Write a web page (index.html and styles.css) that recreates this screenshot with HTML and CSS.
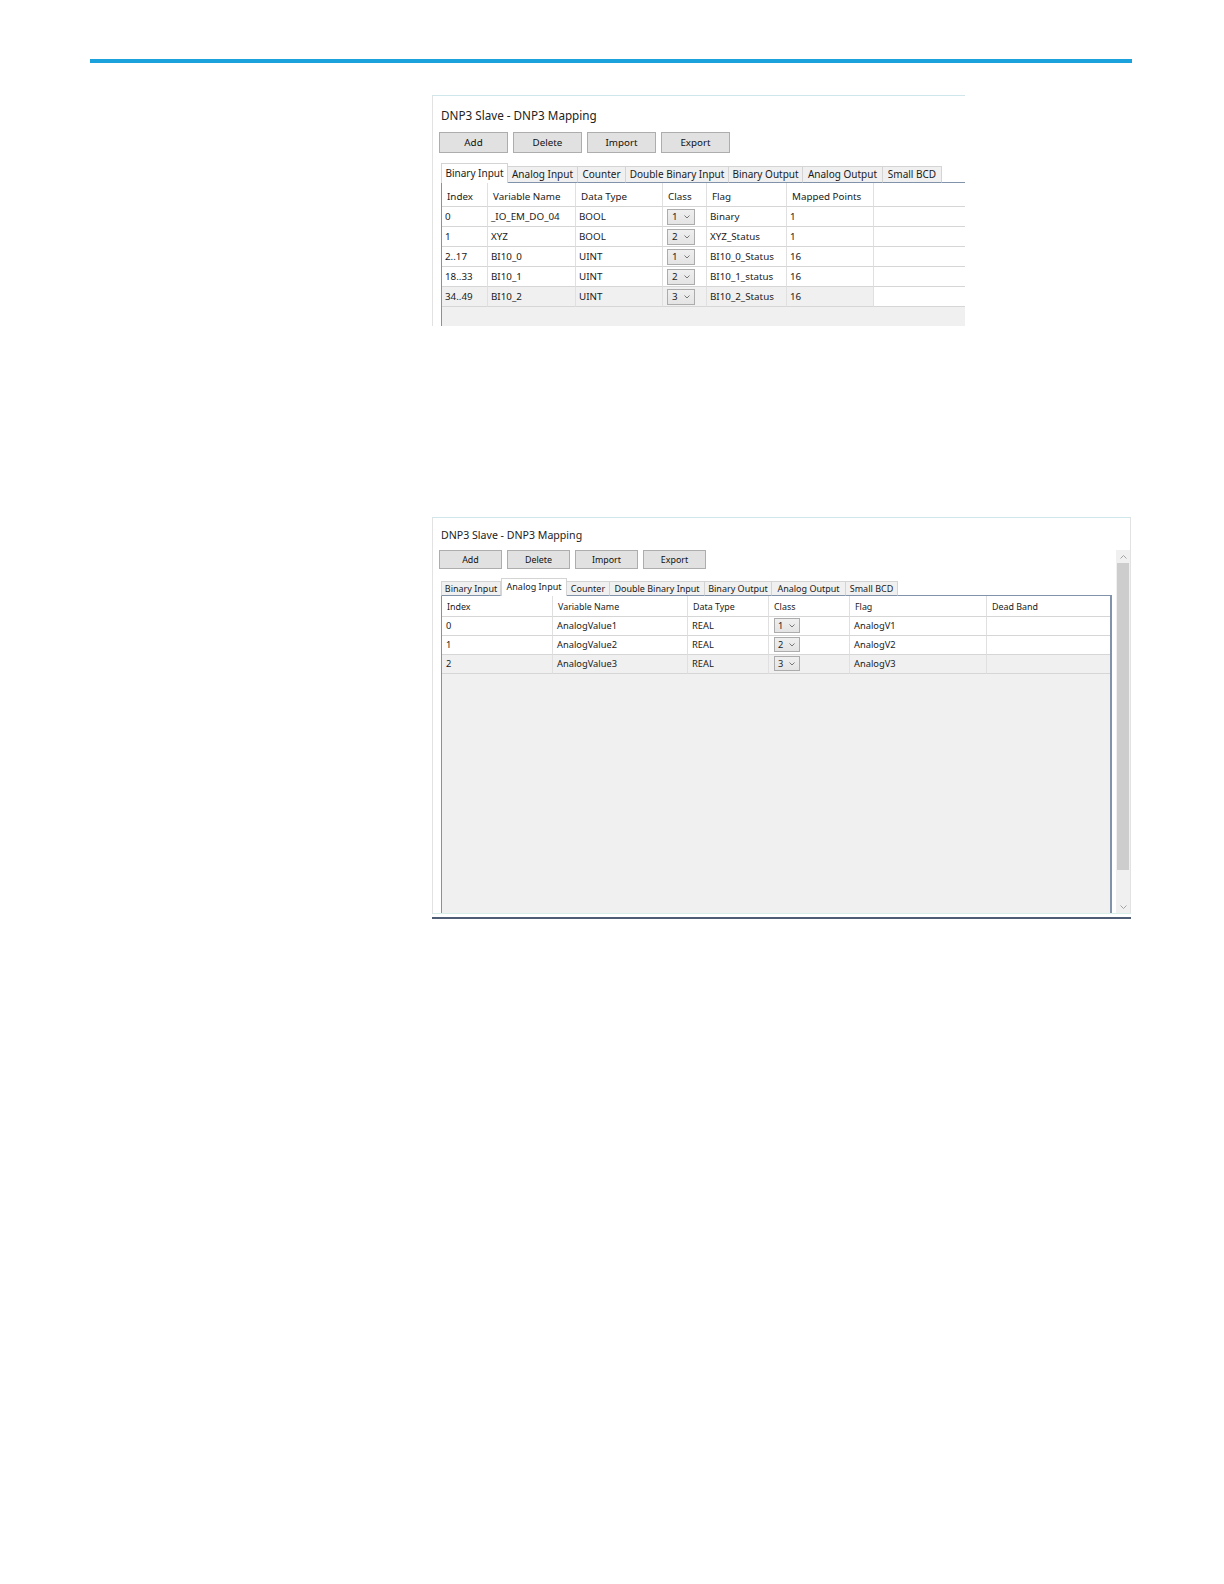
FILE: index.html
```html
<!DOCTYPE html>
<html>
<head>
<meta charset="utf-8">
<title>DNP3 Mapping</title>
<link rel="stylesheet" href="styles.css">
</head>
<body>
<div class="page">
  <div class="rule"></div>

  <section class="panel panel-a">
    <div class="title">DNP3 Slave - DNP3 Mapping</div>
    <div class="toolbar">
      <button class="btn">Add</button>
      <button class="btn">Delete</button>
      <button class="btn">Import</button>
      <button class="btn">Export</button>
    </div>
    <div class="tabs">
      <div class="tab active w-bi">Binary Input</div>
      <div class="tab w-ai">Analog Input</div>
      <div class="tab w-ct">Counter</div>
      <div class="tab w-dbi">Double Binary Input</div>
      <div class="tab w-bo">Binary Output</div>
      <div class="tab w-ao">Analog Output</div>
      <div class="tab w-sb">Small BCD</div>
      <div class="tab-fill"></div>
    </div>
    <div class="grid">
      <div class="row head">
        <div class="cell">Index</div><div class="cell">Variable Name</div><div class="cell">Data Type</div><div class="cell">Class</div><div class="cell">Flag</div><div class="cell">Mapped Points</div><div class="cell fill"></div>
      </div>
      <div class="row">
        <div class="cell">0</div><div class="cell">_IO_EM_DO_04</div><div class="cell">BOOL</div>
        <div class="cell"><div class="combo"><span>1</span><svg class="chev" width="6" height="4" viewBox="0 0 6 4"><path d="M0.5 0.5 L3 3 L5.5 0.5" fill="none" stroke="#777" stroke-width="1"/></svg></div></div>
        <div class="cell">Binary</div><div class="cell">1</div><div class="cell fill"></div>
      </div>
      <div class="row">
        <div class="cell">1</div><div class="cell">XYZ</div><div class="cell">BOOL</div>
        <div class="cell"><div class="combo"><span>2</span><svg class="chev" width="6" height="4" viewBox="0 0 6 4"><path d="M0.5 0.5 L3 3 L5.5 0.5" fill="none" stroke="#777" stroke-width="1"/></svg></div></div>
        <div class="cell">XYZ_Status</div><div class="cell">1</div><div class="cell fill"></div>
      </div>
      <div class="row">
        <div class="cell">2..17</div><div class="cell">BI10_0</div><div class="cell">UINT</div>
        <div class="cell"><div class="combo"><span>1</span><svg class="chev" width="6" height="4" viewBox="0 0 6 4"><path d="M0.5 0.5 L3 3 L5.5 0.5" fill="none" stroke="#777" stroke-width="1"/></svg></div></div>
        <div class="cell">BI10_0_Status</div><div class="cell">16</div><div class="cell fill"></div>
      </div>
      <div class="row">
        <div class="cell">18..33</div><div class="cell">BI10_1</div><div class="cell">UINT</div>
        <div class="cell"><div class="combo"><span>2</span><svg class="chev" width="6" height="4" viewBox="0 0 6 4"><path d="M0.5 0.5 L3 3 L5.5 0.5" fill="none" stroke="#777" stroke-width="1"/></svg></div></div>
        <div class="cell">BI10_1_status</div><div class="cell">16</div><div class="cell fill"></div>
      </div>
      <div class="row alt">
        <div class="cell">34..49</div><div class="cell">BI10_2</div><div class="cell">UINT</div>
        <div class="cell"><div class="combo"><span>3</span><svg class="chev" width="6" height="4" viewBox="0 0 6 4"><path d="M0.5 0.5 L3 3 L5.5 0.5" fill="none" stroke="#777" stroke-width="1"/></svg></div></div>
        <div class="cell">BI10_2_Status</div><div class="cell">16</div><div class="cell fill"></div>
      </div>
      <div class="grid-empty"></div>
    </div>
  </section>

  <section class="panel panel-b">
    <div class="title">DNP3 Slave - DNP3 Mapping</div>
    <div class="body">
      <div class="main">
        <div class="toolbar">
          <button class="btn">Add</button>
          <button class="btn">Delete</button>
          <button class="btn">Import</button>
          <button class="btn">Export</button>
        </div>
        <div class="tabs">
          <div class="tab w-bi">Binary Input</div>
          <div class="tab active w-ai">Analog Input</div>
          <div class="tab w-ct">Counter</div>
          <div class="tab w-dbi">Double Binary Input</div>
          <div class="tab w-bo">Binary Output</div>
          <div class="tab w-ao">Analog Output</div>
          <div class="tab w-sb">Small BCD</div>
          <div class="tab-fill"></div>
        </div>
        <div class="grid">
          <div class="row head">
            <div class="cell">Index</div><div class="cell">Variable Name</div><div class="cell">Data Type</div><div class="cell">Class</div><div class="cell">Flag</div><div class="cell">Dead Band</div>
          </div>
          <div class="row">
            <div class="cell">0</div><div class="cell">AnalogValue1</div><div class="cell">REAL</div>
            <div class="cell"><div class="combo"><span>1</span><svg class="chev" width="6" height="4" viewBox="0 0 6 4"><path d="M0.5 0.5 L3 3 L5.5 0.5" fill="none" stroke="#777" stroke-width="1"/></svg></div></div>
            <div class="cell">AnalogV1</div><div class="cell"></div>
          </div>
          <div class="row">
            <div class="cell">1</div><div class="cell">AnalogValue2</div><div class="cell">REAL</div>
            <div class="cell"><div class="combo"><span>2</span><svg class="chev" width="6" height="4" viewBox="0 0 6 4"><path d="M0.5 0.5 L3 3 L5.5 0.5" fill="none" stroke="#777" stroke-width="1"/></svg></div></div>
            <div class="cell">AnalogV2</div><div class="cell"></div>
          </div>
          <div class="row alt">
            <div class="cell">2</div><div class="cell">AnalogValue3</div><div class="cell">REAL</div>
            <div class="cell"><div class="combo"><span>3</span><svg class="chev" width="6" height="4" viewBox="0 0 6 4"><path d="M0.5 0.5 L3 3 L5.5 0.5" fill="none" stroke="#777" stroke-width="1"/></svg></div></div>
            <div class="cell">AnalogV3</div><div class="cell"></div>
          </div>
          <div class="grid-empty"></div>
        </div>
      </div>
      <div class="scrollbar">
        <div class="sb-btn"><svg width="7" height="4" viewBox="0 0 7 4"><path d="M0.5 3.5 L3.5 0.5 L6.5 3.5" fill="none" stroke="#a3a3a3" stroke-width="1"/></svg></div>
        <div class="sb-thumb"></div>
        <div class="sb-track"></div>
        <div class="sb-btn"><svg width="7" height="4" viewBox="0 0 7 4"><path d="M0.5 0.5 L3.5 3.5 L6.5 0.5" fill="none" stroke="#a3a3a3" stroke-width="1"/></svg></div>
      </div>
    </div>
  </section>
  <div class="panel-foot"></div>
</div>
</body>
</html>
```

FILE: styles.css
```css
* { box-sizing: border-box; }
html, body { margin: 0; padding: 0; background: #fff; }
body {
  width: 1224px;
  height: 1584px;
  font-family: "Noto Sans", "Open Sans", sans-serif;
  color: #1a1a1a;
  overflow: hidden;
}
.page { padding-top: 59px; }
.rule { margin-left: 90px; width: 1042px; height: 4px; background: #1ba1dc; }

.panel { margin-left: 432px; background: #fff; display: flex; flex-direction: column; }
.title { padding-left: 8px; color: #222; white-space: nowrap; }
.toolbar { display: flex; gap: 5px; }
.btn {
  margin: 0; padding: 0;
  background: #e1e1e1;
  border: 1px solid #adadad;
  font-family: inherit;
  color: #111;
  text-align: center;
}
.tabs { display: flex; align-items: flex-end; }
.tab {
  flex: none;
  background: #f0f0f0;
  border-top: 1px solid #d4d4d4;
  border-right: 1px solid #d4d4d4;
  border-bottom: 1px solid #8193aa;
  text-align: center;
  white-space: nowrap;
  color: #1a1a1a;
}
.tab:first-child { border-left: 1px solid #d4d4d4; }
.tab.active { background: #fff; border-bottom: none; border-left: 1px solid #d4d4d4; }
.tab-fill { flex: 1; border-bottom: 1px solid #8193aa; align-self: stretch; }

.grid { display: flex; flex-direction: column; border-left: 1px solid #8193aa; overflow: hidden; }
.row { display: grid; }
.cell {
  border-right: 1px solid #e0e0e0;
  border-bottom: 1px solid #d6d6d6;
  white-space: nowrap;
  overflow: hidden;
  background: #fff;
}
.row.alt .cell { background: #f0f0f0; }
.row.alt .cell.fill { background: #fff; }
.cell.fill { border-right: none; }
.grid-empty { flex: 1; background: #f0f0f0; }

.combo {
  display: flex;
  align-items: center;
  justify-content: space-between;
  background: linear-gradient(#efefef, #e4e4e4);
  border: 1px solid #acacac;
  color: #222;
}

/* ---------- panel A (top) ---------- */
.panel-a {
  margin-top: 32px;
  width: 533px;
  height: 231px;
  border-top: 1px solid #cfe6ea;
  border-left: 1px solid #e2e2e2;
}
.panel-a .title { margin-top: 11px; font-size: 11.7px; line-height: 16px; }
.panel-a .toolbar { margin-top: 9px; padding-left: 6px; }
.panel-a .btn { width: 69px; height: 21px; font-size: 9.8px; line-height: 19px; }
.panel-a .tabs { margin-top: 10px; margin-left: 8px; height: 20px; }
.panel-a .tab { height: 17px; font-size: 10px; line-height: 15px; }
.panel-a .tab.active { height: 20px; line-height: 18px; }
.panel-a .w-bi { width: 67px; }
.panel-a .w-ai { width: 70px; }
.panel-a .w-ct { width: 48px; }
.panel-a .w-dbi { width: 103px; }
.panel-a .w-bo { width: 74px; }
.panel-a .w-ao { width: 80px; }
.panel-a .w-sb { width: 59px; }
.panel-a .grid { flex: 1; margin-left: 8px; }
.panel-a .row { grid-template-columns: 46px 88px 87px 44px 80px 87px 1fr; height: 20px; font-size: 9.8px; }
.panel-a .cell { line-height: 18px; padding-top: 1px; padding-left: 3px; }
.panel-a .row.head { height: 24px; }
.panel-a .row.head .cell { line-height: 15px; padding-top: 6px; padding-left: 5px; }
.panel-a .combo { margin: 1px 0 0 1px; width: 28px; height: 16px; line-height: 14px; padding: 0 4px 0 4px; font-size: 9.8px; }

/* ---------- panel B (bottom) ---------- */
.panel-b {
  margin-top: 191px;
  width: 699px;
  height: 397px;
  border-top: 1px solid #cfe6ea;
  border-left: 1px solid #e2e2e2;
  border-right: 1px solid #e2e2e2;
  border-bottom: 1px solid #d6efe9;
}
.panel-b .title { margin-top: 10px; font-size: 10.6px; line-height: 14px; }
.panel-b .body { flex: 1; display: flex; padding-top: 8px; min-height: 0; }
.panel-b .main { flex: 1; display: flex; flex-direction: column; min-width: 0; }
.panel-b .toolbar { padding-left: 6px; }
.panel-b .btn { width: 63px; height: 19px; font-size: 8.9px; line-height: 17px; }
.panel-b .tabs { margin-top: 9px; margin-left: 8px; width: 671px; height: 18px; }
.panel-b .tab { height: 15px; font-size: 9px; line-height: 13px; }
.panel-b .tab.active { height: 18px; line-height: 16px; }
.panel-b .w-bi { width: 60px; }
.panel-b .w-ai { width: 66px; }
.panel-b .w-ct { width: 43px; }
.panel-b .w-dbi { width: 95px; }
.panel-b .w-bo { width: 67px; }
.panel-b .w-ao { width: 74px; }
.panel-b .w-sb { width: 52px; }
.panel-b .grid { flex: 1; margin-left: 8px; width: 671px; border-right: 2px solid #8193aa; }
.panel-b .row { grid-template-columns: 111px 135px 81px 81px 137px 123px; height: 19px; font-size: 9.3px; }
.panel-b .cell { line-height: 18px; padding-left: 4px; }
.panel-b .row .cell:last-child { border-right: none; }
.panel-b .row.head { height: 21px; font-size: 8.9px; }
.panel-b .row.head .cell { line-height: 14px; padding-top: 4px; padding-left: 5px; }
.panel-b .combo { margin: 1px 0 0 1px; width: 26px; height: 15px; line-height: 13px; padding: 0 4px 0 3px; font-size: 9.3px; }

.scrollbar { width: 14px; display: flex; flex-direction: column; background: #f0f0f0; }
.sb-btn { height: 13px; display: flex; align-items: center; justify-content: center; }
.sb-thumb { height: 307px; margin: 0 1px; background: #cdcdcd; }
.sb-track { flex: 1; }

.panel-foot { margin-left: 432px; margin-top: 3px; width: 699px; height: 2px; background: #4d5d74; }
```
